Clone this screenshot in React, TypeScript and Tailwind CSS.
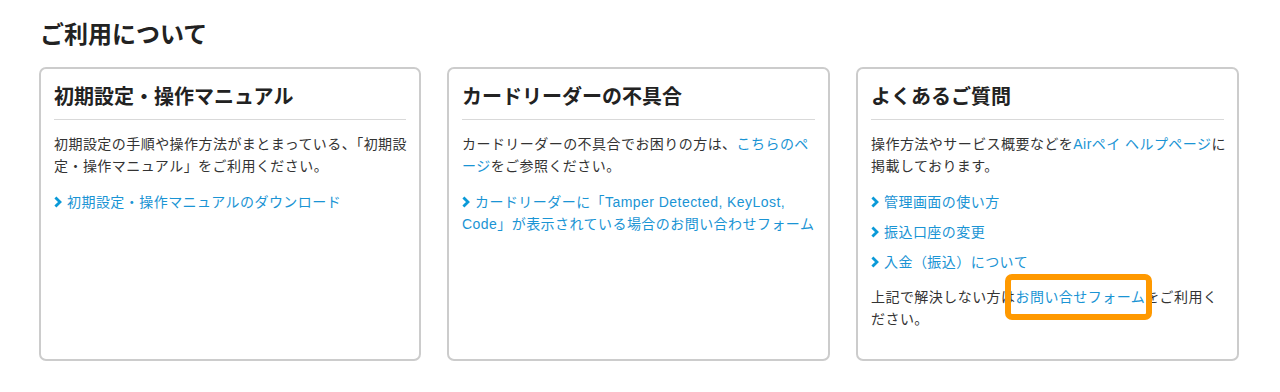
import React from "react";

const font = { fontFamily: '"Liberation Sans", "Noto Sans CJK JP", sans-serif' };

function Chevron() {
  return (
    <svg
      viewBox="0 0 8 12"
      className="inline-block w-[8px] h-[12px] mr-[5px] align-[-1px]"
      aria-hidden="true"
    >
      <polyline points="1.4,1.4 6,6 1.4,10.6" fill="none" stroke="#0a9ad8" strokeWidth="2.8" />
    </svg>
  );
}

function LinkItem({ children }: { children: React.ReactNode }) {
  return (
    <p className="text-[#1a94d4] whitespace-nowrap">
      <Chevron />
      {children}
    </p>
  );
}

function Card({ title, children }: { title: string; children: React.ReactNode }) {
  return (
    <div className="border-2 border-[#cccccc] rounded-[7px] bg-white px-[13px] pt-[13px] pb-[29px]">
      <h3 className="text-[20px] leading-[30px] font-bold text-[#222] pb-[7px] border-b border-[#d9d9d9]">
        {title}
      </h3>
      <div className="text-[14px] leading-[22px] tracking-[0.45px] text-[#333]">{children}</div>
    </div>
  );
}

export default function App() {
  return (
    <div className="w-[1280px] h-[392px] bg-white pt-[17px]" style={font}>
      <div className="ml-[39px]">
        <h2 className="text-[24px] leading-[36px] font-bold text-[#222] pl-[1px] mb-[14px]">ご利用について</h2>
        <div className="grid grid-cols-[382px_383px_383px] gap-[26px]">
          <Card title="初期設定・操作マニュアル">
            <p className="mt-[13px] whitespace-nowrap">
              初期設定の手順や操作方法がまとまっている、「初期設
              <br />
              定・操作マニュアル」をご利用ください。
            </p>
            <div className="mt-[14px]">
              <LinkItem>初期設定・操作マニュアルのダウンロード</LinkItem>
            </div>
          </Card>

          <Card title="カードリーダーの不具合">
            <p className="mt-[13px] whitespace-nowrap">
              カードリーダーの不具合でお困りの方は、<span className="text-[#1a94d4]">こちらのペ
              <br />
              ージ</span>をご参照ください。
            </p>
            <div className="mt-[14px]">
              <LinkItem>
                カードリーダーに「Tamper Detected, KeyLost,
                <br />
                Code」が表示されている場合のお問い合わせフォーム
              </LinkItem>
            </div>
          </Card>

          <Card title="よくあるご質問">
            <p className="mt-[13px] whitespace-nowrap">
              操作方法やサービス概要などを<span className="text-[#1a94d4]">Airペイ ヘルプページ</span>に
              <br />
              掲載しております。
            </p>
            <div className="mt-[14px] flex flex-col gap-[8px]">
              <LinkItem>管理画面の使い方</LinkItem>
              <LinkItem>振込口座の変更</LinkItem>
              <LinkItem>入金（振込）について</LinkItem>
            </div>
            <p className="mt-[13px] whitespace-nowrap">
              上記で解決しない方は
              <span className="relative text-[#1a94d4]">
                お問い合せフォーム
                <span className="absolute -left-[11px] -right-[7px] -top-[15px] -bottom-[15px] border-[6px] border-[#ff9900] rounded-[7px]"></span>
              </span>
              をご利用く
              <br />
              ださい。
            </p>
          </Card>
        </div>
      </div>
    </div>
  );
}
